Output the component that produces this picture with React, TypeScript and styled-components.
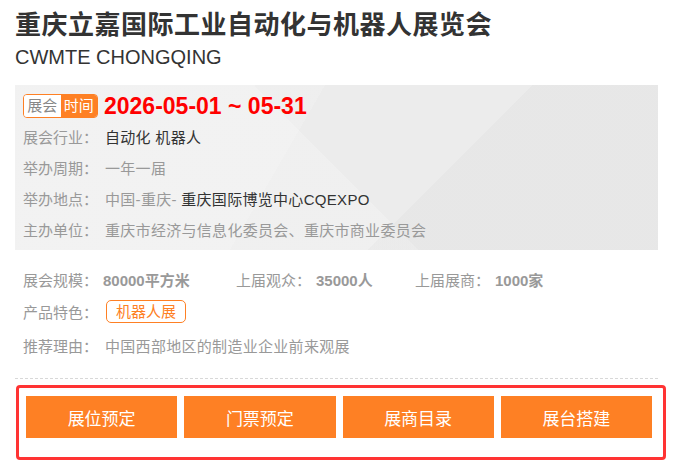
import React from "react";
import styled, { createGlobalStyle } from "styled-components";

const Global = createGlobalStyle`
  html, body { margin: 0; padding: 0; background: #fff; }
  body { font-family: "Liberation Sans", "Noto Sans CJK SC", sans-serif; }
  * { box-sizing: border-box; }
`;

const Page = styled.div`
  width: 673px;
  padding: 8px 15px 0 15px;
`;

const Title = styled.h1`
  margin: 0;
  font-size: 26px;
  letter-spacing: 0.5px;
  line-height: 34px;
  font-weight: bold;
  color: #333;
  white-space: nowrap;
  font-family: "Liberation Sans", "Noto Sans CJK SC", sans-serif;
`;

const Subtitle = styled.div`
  font-size: 20px;
  line-height: 26px;
  color: #333;
  margin-top: 2px;
`;

const InfoBox = styled.div`
  margin-top: 15px;
  width: 643px;
  padding: 9px 8px 5px 8px;
  background:
    linear-gradient(135deg, transparent 0 64%, rgba(0, 0, 0, 0.02) 64% 100%),
    linear-gradient(45deg, rgba(255, 255, 255, 0.2) 0 50%, transparent 50% 100%),
    linear-gradient(120deg, rgba(255, 255, 255, 0.15) 0 42%, transparent 42% 100%),
    #ececec;
`;

const DateRow = styled.div`
  display: flex;
  align-items: center;
  height: 24px;
  margin-bottom: 3px;
`;

const Badge = styled.div`
  display: flex;
  width: 75px;
  height: 24px;
  border: 1px solid #fe8024;
  border-radius: 4px;
  overflow: hidden;
  font-size: 15px;
  line-height: 22px;
`;

const BadgePart = styled.span<{ $filled?: boolean }>`
  flex: 1;
  text-align: center;
  background: ${(p) => (p.$filled ? "#fe8024" : "#fff")};
  color: ${(p) => (p.$filled ? "#fff" : "#888")};
`;

const DateText = styled.span`
  margin-left: 6px;
  font-size: 23px;
  font-weight: bold;
  color: #f00;
  font-family: "Liberation Sans", Arial, sans-serif;
  line-height: 24px;
`;

const Row = styled.div<{ $h?: number }>`
  display: flex;
  align-items: center;
  height: ${(p) => p.$h ?? 31}px;
  font-size: 15px;
  white-space: nowrap;
`;

const Label = styled.span`
  width: 82px;
  flex: none;
  color: #999;
`;

const Value = styled.span<{ $dark?: boolean }>`
  color: ${(p) => (p.$dark ? "#333" : "#999")};
  letter-spacing: 0.3px;
`;

const Outer = styled.div`
  padding: 13px 8px 0 8px;
`;

const StatLabel = styled.span`
  display: inline-block;
  width: 80px;
  color: #999;
`;

const StatValue = styled.span`
  color: #999;
  font-weight: bold;
`;

const Stat = styled.span<{ $w: number }>`
  width: ${(p) => p.$w}px;
  flex: none;
`;

const Tag = styled.span`
  display: inline-block;
  height: 23px;
  line-height: 21px;
  padding: 0 9px;
  border: 1px solid #fe8024;
  border-radius: 5px;
  color: #fe8024;
  margin-left: 1px;
`;

const Divider = styled.div`
  margin-top: 15px;
  width: 643px;
  border-top: 1px dashed #d8d8d8;
`;

const Highlight = styled.div`
  margin: 6px 0 0 1px;
  width: 650px;
  height: 75px;
  border: 3px solid #ff3333;
  border-radius: 4px;
  padding: 8px 11px 0 7px;
  display: grid;
  grid-template-columns: repeat(4, 1fr);
  column-gap: 7px;
  align-content: start;
`;

const ActionButton = styled.a`
  display: flex;
  align-items: center;
  justify-content: center;
  height: 42px;
  background: #fe8024;
  color: #fff;
  font-size: 17px;
  text-decoration: none;
`;

export default function App() {
  return (
    <>
      <Global />
      <Page>
        <Title>重庆立嘉国际工业自动化与机器人展览会</Title>
        <Subtitle>CWMTE CHONGQING</Subtitle>
        <InfoBox>
          <DateRow>
            <Badge>
              <BadgePart>展会</BadgePart>
              <BadgePart $filled>时间</BadgePart>
            </Badge>
            <DateText>2026-05-01 ~ 05-31</DateText>
          </DateRow>
          <Row>
            <Label>展会行业：</Label>
            <Value $dark>自动化 机器人</Value>
          </Row>
          <Row>
            <Label>举办周期：</Label>
            <Value>一年一届</Value>
          </Row>
          <Row>
            <Label>举办地点：</Label>
            <Value>
              中国-重庆- <Value $dark>重庆国际博览中心CQEXPO</Value>
            </Value>
          </Row>
          <Row>
            <Label>主办单位：</Label>
            <Value>重庆市经济与信息化委员会、重庆市商业委员会</Value>
          </Row>
        </InfoBox>
        <Outer>
          <Row $h={32}>
            <Stat $w={213}>
              <StatLabel>展会规模：</StatLabel>
              <StatValue>80000平方米</StatValue>
            </Stat>
            <Stat $w={179}>
              <StatLabel>上届观众：</StatLabel>
              <StatValue>35000人</StatValue>
            </Stat>
            <Stat $w={200}>
              <StatLabel>上届展商：</StatLabel>
              <StatValue>1000家</StatValue>
            </Stat>
          </Row>
          <Row $h={33}>
            <Label>产品特色：</Label>
            <Tag>机器人展</Tag>
          </Row>
          <Row $h={35}>
            <Label>推荐理由：</Label>
            <Value>中国西部地区的制造业企业前来观展</Value>
          </Row>
        </Outer>
        <Divider />
        <Highlight>
          <ActionButton>展位预定</ActionButton>
          <ActionButton>门票预定</ActionButton>
          <ActionButton>展商目录</ActionButton>
          <ActionButton>展台搭建</ActionButton>
        </Highlight>
      </Page>
    </>
  );
}
